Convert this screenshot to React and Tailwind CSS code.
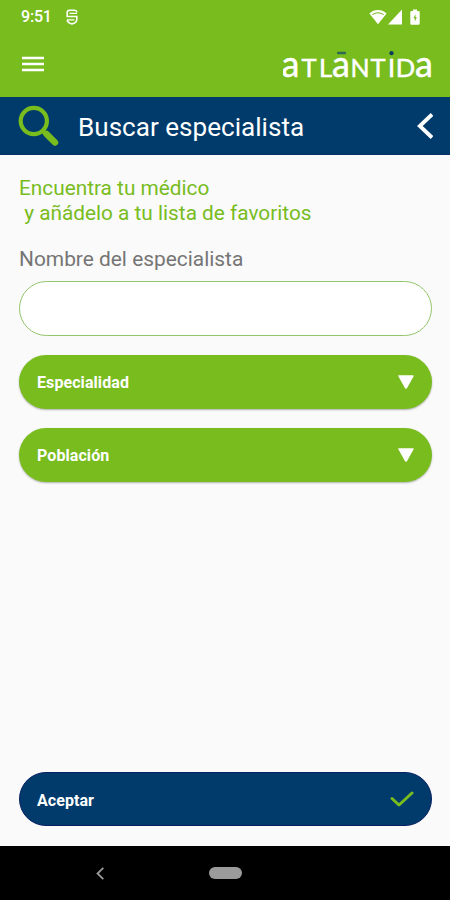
import React from 'react';

// --- Logo: minúsculas y mayúsculas a la misma altura ---
const logoLetters = [
    { char: 'a', x: 7.5, size: 36 },
    { char: 'T', x: 26, size: 25.5 },
    { char: 'L', x: 42.5, size: 25.5 },
    { char: 'a', x: 58, size: 36 },
    { char: 'N', x: 77, size: 25 },
    { char: 'T', x: 95, size: 25.5 },
    { char: 'I', x: 108.5, size: 25.5 },
    { char: 'D', x: 122.5, size: 25.5 },
    { char: 'a', x: 141, size: 36 },
];

const Logo = () => (
    <svg className="-mt-4 h-[60px] w-[150px]" viewBox="0 -16 150 60" fontFamily="Lato, sans-serif" fill="#fff" stroke="#fff" strokeWidth=".5" textAnchor="middle">
        {logoLetters.map((l, i) => (
            <text key={i} x={l.x} y="27" fontSize={l.size}>{l.char}</text>
        ))}
        <rect x="54" y="1.8" width="9" height="2.4" rx="1" fill="#2e6a55" stroke="none" />
        <circle cx="108.5" cy="3.2" r="2.1" fill="#0b3d5c" stroke="none" />
    </svg>
);

const StatusBar = () => (
    <div className="flex h-[33px] items-center pt-px pl-[21px] pr-[30px] text-white">
        <span className="text-[16px] font-medium tracking-[-0.2px]">9:51</span>
        <svg className="ml-[14px] h-4 w-3" viewBox="0 0 12 16" fill="none" stroke="currentColor" strokeWidth="1.6">
            <path d="M11 3.2Q10.5 1.2 8.5 1.2h-5Q1.2 1.2 1.2 3.5V7.5h9.6v3.3Q10.3 14 6 14.9 1.7 14 1.2 10.8" />
            <path d="M3.5 4.4H11M1 10.8h7.5" strokeWidth="1.3" />
        </svg>
        <svg className="ml-auto h-4 w-[18px]" viewBox="0 0 18 16" fill="currentColor">
            <path d="M9 15.2.4 4.4Q4.2 1 9 1t8.6 3.4z" />
            <path d="M3.3 5.6Q9 2 14.7 5.6" fill="none" stroke="#78bc1e" strokeWidth="1.1" />
        </svg>
        <svg className="ml-px h-4 w-[14px]" viewBox="0 0 14 16" fill="currentColor">
            <path d="M14 .5V15.5H0z" />
        </svg>
        <svg className="ml-2 h-4 w-[10px]" viewBox="0 0 10 16" fill="currentColor">
            <path d="M3 .5h4V2h1.5q1.2 0 1.2 1.2v11.3q0 1.2-1.2 1.2h-7Q.3 15.7.3 14.5V3.2Q.3 2 1.5 2H3z" />
            <path d="M5.5 5.2 3.4 9.3h1.4v3.2L6.900 8.3H5.5z" fill="#78bc1e" />
        </svg>
    </div>
);

const SelectButton = ({ label }) => (
    <button className="flex h-[54px] w-full items-center justify-between rounded-full bg-[#78bc1e] px-[18px] text-white shadow-[0_1px_2px_rgba(0,0,0,0.3)]">
        <span className="pt-0.5 text-[16px] font-bold tracking-[0.08px]">{label}</span>
        <svg className="h-[14px] w-4" viewBox="0 0 16 14" fill="currentColor" stroke="currentColor" strokeWidth="1.5" strokeLinejoin="round">
            <path d="M1 1h14L8.3 13H7.7z" />
        </svg>
    </button>
);

function App() {
    return (
        <div className="flex h-[900px] w-[450px] flex-col bg-[#fafafa] font-['Roboto',sans-serif]">
            <header className="h-[97px] bg-[#78bc1e]">
                <StatusBar />
                <div className="flex items-start justify-between pt-[17px] pl-[22px] pr-[17px]">
                    <svg className="mt-1.5 h-4 w-[22px]" viewBox="0 0 22 16" fill="none" stroke="#fff" strokeWidth="2.5">
                        <path d="M0 2h22M0 8h22M0 14h22" />
                    </svg>
                    <Logo />
                </div>
            </header>

            <div className="flex h-[58px] items-center border-b border-[#0b2e6b] bg-[#003b6c] pl-[18px] pr-[17px]">
                <svg className="h-[42px] w-[42px]" viewBox="0 0 42 42" fill="none" stroke="#78bc1e">
                    <circle cx="15.8" cy="16" r="13.1" strokeWidth="4.2" />
                    <path d="m25 26 3 3" strokeWidth="4.5" />
                    <path d="m28.5 29 8.5 8.5" strokeWidth="6.5" strokeLinecap="round" />
                </svg>
                <h1 className="ml-[18px] pt-0.5 text-[26.1px] leading-8 text-white">Buscar especialista</h1>
                <svg className="ml-auto h-[26px] w-4" viewBox="0 0 16 26" fill="none" stroke="#fff" strokeWidth="3.8">
                    <path d="M15 1.5 2.8 13 15 24.5" />
                </svg>
            </div>

            <main className="flex grow flex-col pt-[21px] pr-[18px] pb-5 pl-[19px]">
                <p className="text-[20.8px] leading-[24.5px] whitespace-pre text-[#78bc1e]">{'Encuentra tu médico\n y añádelo a tu lista de favoritos'}</p>
                <label className="mt-[22px] text-[20.9px] leading-[25px] text-[#757575]" htmlFor="nombre">Nombre del especialista</label>
                <input id="nombre" className="mt-[9px] h-[55px] shrink-0 rounded-full border border-[#93c66b] bg-white px-5 text-lg outline-none" />
                <div className="mt-[19px] flex flex-col gap-[19px]">
                    <SelectButton label="Especialidad" />
                    <SelectButton label="Población" />
                </div>
                <button className="mt-auto flex h-[54px] items-center justify-between rounded-full border border-[#0a1f63] bg-[#003b6c] px-[17px] text-white">
                    <span className="pt-[3px] text-[16px] font-bold tracking-[0.05px]">Aceptar</span>
                    <svg className="h-4 w-6" viewBox="0 0 24 16" fill="none" stroke="#78bc1e" strokeWidth="3" strokeLinecap="round" strokeLinejoin="round">
                        <path d="m2 7.5 7 6.5L22 2" />
                    </svg>
                </button>
            </main>

            <nav className="flex h-[54px] items-center bg-black pl-[96px]">
                <svg className="h-[13px] w-2" viewBox="0 0 8 13" fill="none" stroke="#999" strokeWidth="1.8">
                    <path d="M7.3 .8 1.5 6.5l5.8 5.7" />
                </svg>
                <div className="ml-[105px] h-3 w-[33px] rounded-full bg-[#9b9b9b]" />
            </nav>
        </div>
    );
}

export default App;
